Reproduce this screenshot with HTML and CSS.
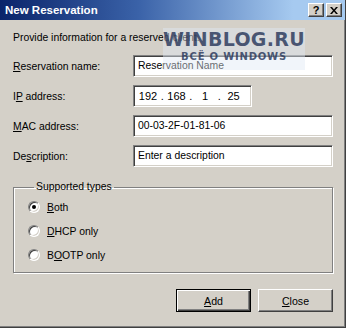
FILE: index.html
```html
<!DOCTYPE html>
<html lang="en">
  <head>
    <meta charset="utf-8" />
    <title>New Reservation</title>
    <link rel="stylesheet" href="styles.css">
  </head>
  <body>
    <div class="window">
      <div class="titlebar">
        <span class="title">New Reservation</span>
        <div class="title-buttons">
          <span class="tbtn">?</span>
          <span class="tbtn close">
            <svg width="8" height="7" viewBox="0 0 8 7"><path d="M0 0h2l2 2.5 2-2.5h2l-3 3.5 3 3.5h-2l-2-2.5-2 2.5h-2l3-3.5z" fill="#000"/></svg>
          </span>
        </div>
      </div>

      <div class="content">
        <p class="intro">Provide information for a reserved client.</p>

        <div class="form">
          <label class="label"><u>R</u>eservation name:</label>
          <div class="field">Reservation Name</div>

          <label class="label">I<u>P</u> address:</label>
          <div class="field ip">
            <span class="seg">192</span><span class="dot">.</span><span class="seg">168</span><span class="dot">.</span><span class="seg">1</span><span class="dot">.</span><span class="seg">25</span>
          </div>

          <label class="label"><u>M</u>AC address:</label>
          <div class="field">00-03-2F-01-81-06</div>

          <label class="label">De<u>s</u>cription:</label>
          <div class="field">Enter a description</div>
        </div>

        <fieldset class="group">
          <legend>Supported types</legend>
          <div class="radio-row"><span class="radio checked"></span><span><u>B</u>oth</span></div>
          <div class="radio-row"><span class="radio"></span><span><u>D</u>HCP only</span></div>
          <div class="radio-row"><span class="radio"></span><span>B<u>O</u>OTP only</span></div>
        </fieldset>

        <div class="actions">
          <button type="button" class="btn default"><u>A</u>dd</button>
          <button type="button" class="btn"><u>C</u>lose</button>
        </div>
      </div>

      <div class="watermark">
        <div class="wm-big">WINBLOG.RU</div>
        <div class="wm-small">ВСЁ О WINDOWS</div>
      </div>
    </div>
  </body>
</html>
```

FILE: styles.css
```css
* {
  margin: 0;
  padding: 0;
  box-sizing: border-box;
}

body {
  background: #d4d0c8;
  font-family: "Liberation Sans", Arial, sans-serif;
  font-size: 10.4px;
  color: #000;
}

.window {
  position: relative;
  width: 346px;
  height: 328px;
  background: #d4d0c8;
  border-right: 1px solid #404040;
  border-bottom: 1px solid #404040;
  box-shadow: inset -1px -1px 0 #808080;
}

.titlebar {
  height: 20px;
  display: flex;
  align-items: center;
  justify-content: space-between;
  padding: 0 3px 0 5px;
  background: linear-gradient(to right, #0a246a, #3a62a8 40%, #a6caf0 85%);
}

.title {
  color: #fff;
  font-weight: bold;
  font-size: 11.5px;
}

.title-buttons {
  display: flex;
  gap: 2px;
}

.tbtn {
  width: 16px;
  height: 14px;
  display: flex;
  align-items: center;
  justify-content: center;
  background: #d4d0c8;
  font-weight: bold;
  font-size: 11px;
  border-top: 1px solid #fff;
  border-left: 1px solid #fff;
  border-right: 1px solid #404040;
  border-bottom: 1px solid #404040;
  box-shadow: inset -1px -1px 0 #808080;
}

.content {
  padding: 12px 12px 0 13px;
}

.intro {
  line-height: 12px;
}

.form {
  display: grid;
  grid-template-columns: 120px 200px;
  grid-auto-rows: 22px;
  row-gap: 8px;
  align-items: center;
  margin-top: 11px;
}

.field {
  height: 22px;
  background: #fff;
  border-top: 1px solid #808080;
  border-left: 1px solid #808080;
  border-right: 1px solid #fff;
  border-bottom: 1px solid #fff;
  box-shadow: inset 1px 1px 0 #404040, inset -1px -1px 0 #d4d0c8;
  padding: 3px 4px;
  line-height: 14px;
}

.field.ip {
  width: 119px;
  display: flex;
  padding: 3px 2px;
  font-size: 11px;
}

.seg {
  width: 24px;
  text-align: center;
}

.dot {
  width: 4.5px;
  text-align: center;
}

.group {
  margin-top: 14px;
  width: 320px;
  height: 92px;
  border: 1px solid #808080;
  box-shadow: inset 1px 1px 0 #fff, 1px 1px 0 #fff;
  padding: 2px 0 0 14px;
}

.group legend {
  margin-left: 6px;
  padding: 0 2px;
  line-height: 12px;
}

.radio-row {
  display: flex;
  align-items: center;
  gap: 7px;
  height: 24px;
}

.radio {
  width: 12px;
  height: 12px;
  border-radius: 50%;
  background: #fff;
  border: 1px solid;
  border-color: #808080 #fff #fff #808080;
  box-shadow: inset 1px 1px 0 #404040, inset -1px -1px 0 #d4d0c8;
  display: flex;
  align-items: center;
  justify-content: center;
}

.radio.checked::after {
  content: "";
  width: 4px;
  height: 4px;
  border-radius: 50%;
  background: #000;
}

.actions {
  display: flex;
  justify-content: flex-end;
  gap: 7px;
  margin-top: 16px;
}

.btn {
  width: 75px;
  height: 23px;
  font-family: inherit;
  font-size: 10.6px;
  background: #d4d0c8;
  border-top: 1px solid #fff;
  border-left: 1px solid #fff;
  border-right: 1px solid #404040;
  border-bottom: 1px solid #404040;
  box-shadow: inset -1px -1px 0 #808080;
}

.btn.default {
  border: 1px solid #000;
  box-shadow: inset 1px 1px 0 #fff, inset -1px -1px 0 #404040, inset -2px -2px 0 #808080;
}

.watermark {
  position: absolute;
  left: 163px;
  top: 28px;
  width: 142px;
  height: 42px;
  background: rgba(225, 232, 245, 0.45);
  text-align: center;
  color: rgba(40, 55, 90, 0.82);
  font-family: "DejaVu Sans", sans-serif;
  font-weight: bold;
}

.wm-big {
  font-size: 19px;
  line-height: 22px;
  letter-spacing: 0.3px;
}

.wm-small {
  font-size: 10px;
  line-height: 14px;
  letter-spacing: 0.8px;
}
```
